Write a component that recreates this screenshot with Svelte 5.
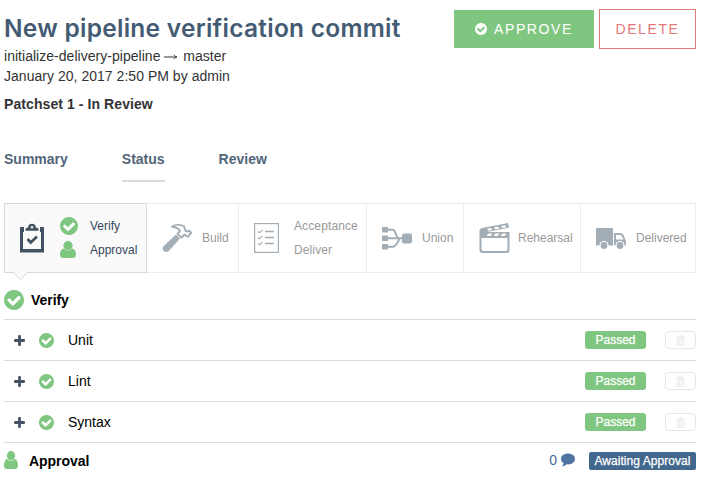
<script>
  const checks = ['Unit', 'Lint', 'Syntax'];
  const stages = [
    { icon: 'hammer', labels: ['Build'], width: 92, pad: 15, gap: 10 },
    { icon: 'list', labels: ['Acceptance', 'Deliver'], width: 128, pad: 15, gap: 15 },
    { icon: 'union', labels: ['Union'], width: 97, pad: 15, gap: 10 },
    { icon: 'clapper', labels: ['Rehearsal'], width: 117, pad: 15, gap: 8 },
    { icon: 'truck', labels: ['Delivered'], width: 115, pad: 15, gap: 10 }
  ];
</script>

{#snippet check(size)}
  <svg width={size} height={size} viewBox="128 128 1536 1536" fill="currentColor">
    <path d="M1412 734q0-28-18-46l-91-90q-19-19-45-19t-45 19l-408 407-226-226q-19-19-45-19t-45 19l-91 90q-18 18-18 46 0 27 18 45l362 362q19 19 45 19 27 0 46-19l543-543q18-18 18-45zm252 162q0 209-103 385.5t-279.5 279.5-385.5 103-385.5-103-279.5-279.5-103-385.5 103-385.5 279.5-279.5 385.5-103 385.5 103 279.5 279.5 103 385.5z" />
  </svg>
{/snippet}

{#snippet person(w, h)}
  <svg width={w} height={h} viewBox="0 0 16 18" preserveAspectRatio="none" fill="currentColor">
    <circle cx="8" cy="4.800" r="4.700" />
    <path d="M4 8C1 8.400 0 11.800 0 14.800 0 16.800 1.300 18 3 18h10c1.700 0 3-1.200 3-3.200 0-3-1-6.400-4-6.800-1 1.200-2.400 2-4 2s-3-.8-4-2z" />
  </svg>
{/snippet}

<main>
  <header>
    <div class="info">
      <h1>New pipeline verification commit</h1>
      <p>initialize-delivery-pipeline <svg class="arrow" width="14" height="8" viewBox="0 0 14 8"><path d="M0 4h12.500M10 1.800C10.800 3.200 11.800 3.700 13 4c-1.200.3-2.200.8-3 2.200" fill="none" stroke="#333" /></svg> master</p>
      <p>January 20, 2017 2:50 PM by admin</p>
      <h2>Patchset 1 - In Review</h2>
    </div>
    <div class="actions">
      <button class="approve">{@render check(12)}<span>APPROVE</span></button>
      <button class="delete">DELETE</button>
    </div>
  </header>

  <nav>
    <span>Summary</span>
    <span class="current">Status</span>
    <span>Review</span>
  </nav>

  <section class="stages">
    <div class="stage active">
      <svg width="24" height="30" viewBox="0 0 24 30">
        <path d="M0 4h4v5H3v17h18V9h-1V4h4v25.500H0z" fill="#435363" />
        <path d="M5.500 7.800V5.500l2.500-1C8.500 1.800 9.800.8 12 .8s3.500 1 4 3.700l2.500 1v2.300z" fill="#435363" />
        <circle cx="12" cy="4.300" r="1.200" fill="#fafafa" />
        <path d="M7.500 16l3.200 3.500 6.300-6" fill="none" stroke="#435363" stroke-width="2.700" />
      </svg>
      <div class="phases">
        <div><i>{@render check(18)}</i><span>Verify</span></div>
        <div><i class="up">{@render person(16, 17)}</i><span>Approval</span></div>
      </div>
      <svg class="notch" width="17" height="9" viewBox="0 0 17 9"><path d="M1 0l7.500 7.500L16 0" fill="#fafafa" stroke="#d6dadc" /></svg>
    </div>
    {#each stages as s}
      <div class="stage {s.icon}" style:width="{s.width}px" style:padding-left="{s.pad}px" style:gap="{s.gap}px">
        {#if s.icon === 'hammer'}
          <svg width="30" height="30" viewBox="0 0 30 30" fill="#a3adb5">
            <path d="M14 11.500l4 4L7 27.700c-1.700 1.700-4 1.300-5.200.2C.4 26.700.2 24.500 1.700 23z" />
            <path d="M10 3.800C13.500 1.300 18.500 1.300 22 3.300l1.500 4.500 2.300.8 1-1 2.400 2-3 4.200-2.200-1-1.500-1.300-3 3.200-4-4L18 8.200C17 5.300 14 4.300 10 3.800z" fill="#fff" stroke="#a3adb5" stroke-width="1.900" stroke-linejoin="round" />
          </svg>
        {:else if s.icon === 'list'}
          <svg width="25" height="30" viewBox="0 0 25 30" fill="none" stroke="#a3adb5">
            <rect x=".6" y=".6" width="23.800" height="28.800" stroke-width="1.200" />
            <path d="M11 8.500h9M11 14.500h9M11 20.500h9" stroke-width="1.300" />
            <path d="M4 8.500l1.500 1.300 3-3M4 14.500l1.500 1.300 3-3M4 20.500l1.500 1.300 3-3" stroke-width="1.200" />
          </svg>
        {:else if s.icon === 'union'}
          <svg width="30" height="24" viewBox="0 0 30 24" fill="#a3adb5">
            <path d="M0 1h6v5.500H0zM0 9.500h6V15H0zM0 18h6v5.500H0z" />
            <rect x="20" y="7.500" width="10" height="10" rx="2" />
            <path d="M5 3.800h6c2.500 0 3.200 8.500 5.500 8.500S13.500 20.800 11 20.800H5M5 12.300h16" fill="none" stroke="#a3adb5" stroke-width="2" />
          </svg>
        {:else if s.icon === 'clapper'}
          <svg width="31" height="30" viewBox="0 0 31 30" fill="#a3adb5">
            <path fill-rule="evenodd" d="M.5 9H30.500v18q0 3-3 3H3.500q-3 0-3-3zM2.500 15v11Q2.500 28 4.500 28h22q2 0 2-2V15z" />
            <path d="M.5 9.800V7.500Q.6 5.500 3 5L29 0l1 4.800L4 9.800z" />
            <path d="M8 5.800l3.500-.8 2 2-4 .8zM15 4.300l3.500-.7 2 2-4 .8zM22 3l3.500-.7 2 2-4 .8zM9.500 10.600h4l-2 2.500h-4zM16.500 10.600h4l-2 2.500h-4zM23.500 10.600h4l-2 2.500h-4z" fill="#fff" />
          </svg>
        {:else}
          <svg width="30" height="23" viewBox="0 0 30 23" fill="#a3adb5">
            <path d="M1 1h15q1 0 1 1v16.500H0V2q0-1 1-1z" />
            <path fill-rule="evenodd" d="M18 18.500V6h6.500q2 0 3 2l2.500 6.500v4zM20 8v4.500h7.500L25.500 8.800q-.4-.8-1.200-.8z" />
            <circle cx="8" cy="18.500" r="4" stroke="#fff" stroke-width="1.200" /><circle cx="24" cy="18.500" r="4" stroke="#fff" stroke-width="1.200" />
          </svg>
        {/if}
        <div class="labels">{#each s.labels as l}<span>{l}</span>{/each}</div>
      </div>
    {/each}
  </section>

  <section>
    <div class="heading"><i>{@render check(20)}</i><h3>Verify</h3></div>
    {#each checks as name}
      <div class="row">
        <svg width="11" height="11" viewBox="0 0 11 11"><path d="M5.500 1.300v8.400M1.300 5.500h8.400" stroke="#435363" stroke-width="2.800" stroke-linecap="round" /></svg>
        <i>{@render check(15)}</i>
        <span class="name">{name}</span>
        <span class="badge">Passed</span>
        <span class="trash">
          <svg width="9" height="11" viewBox="0 0 9 11" fill="#efefef"><path fill-rule="evenodd" d="M0 1.500h2.500L3 0h3l.5 1.500H9v1.500H8.300V11H.8V3H0zM2.500 4.200v5h.7v-5zm1.700 0v5h.7v-5zm1.700 0v5h.7v-5z" /></svg>
        </span>
      </div>
    {/each}
    <div class="approval">
      <i>{@render person(14, 18)}</i>
      <h3>Approval</h3>
      <span class="count">0</span>
      <svg class="bubble" width="14" height="14" viewBox="0 0 14 14" fill="#4f74a3"><path d="M7 .5C3 .5 0 2.800 0 6c0 1.800 1 3.200 2.600 4.100-.2 1.200-.8 2.200-1.700 3.200C3 13.300 4.600 12.500 5.700 11.300c4.600.6 8.300-1.900 8.300-5.300C14 2.800 11 .5 7 .5z" /></svg>
      <span class="waiting">Awaiting Approval</span>
    </div>
  </section>
</main>

<style>
  :global(body) { background: #fff; }
  main { box-sizing: border-box; width: 703px; height: 482px; overflow: hidden; padding: 9px 7px 0 4px; font: 14px/20px "Liberation Sans", Arial, sans-serif; color: #333; }
  h1, h2, h3, p { margin: 0; white-space: nowrap; }
  svg { display: block; flex: none; }
  i { display: block; color: #7fc780; flex: none; }
  header { display: flex; justify-content: space-between; height: 132px; }
  .info { width: 410px; }
  .info p { letter-spacing: .03px; }
  h1 { box-sizing: border-box; height: 37px; padding-top: 2px; font: 600 24.500px/35px Inter, "Open Sans", sans-serif; color: #435b73; letter-spacing: .26px; }
  .arrow { display: inline-block; vertical-align: 0; margin-right: 1px; }
  h2 { font-size: 14px; margin-top: 8px; letter-spacing: .08px; }
  .actions { display: flex; gap: 5px; align-items: center; height: 40px; }
  button { box-sizing: border-box; display: flex; align-items: center; justify-content: center; border: 0; padding: 0; font: 14px/20px "Liberation Sans", Arial, sans-serif; letter-spacing: 1.6px; }
  .approve { width: 140px; height: 38px; gap: 7px; background: #7fc780; color: #fff; }
  .delete { width: 97px; height: 40px; border: 1px solid #e57878; background: #fff; color: #e57878; }
  nav { display: flex; height: 62px; font-weight: bold; color: #52657a; }
  nav span { padding-top: 8px; height: 31px; margin-right: 54px; }
  .current { border-bottom: 2px solid #d6dbdf; }
  .stages { display: flex; height: 70px; }
  .stage { box-sizing: border-box; display: flex; flex: none; align-items: center; height: 70px; border: solid #ececec; border-width: 1px 1px 1px 0; color: #999; font-size: 12px; }
  .list { letter-spacing: .12px; }
  .labels { display: flex; flex-direction: column; gap: 4px; }
  .stage.active { position: relative; width: 143px; border: 1px solid #d6dadc; background: #fafafa; padding-left: 15px; color: #35485c; gap: 16px; }
  .phases { display: flex; flex-direction: column; gap: 4px; }
  .phases div { display: flex; align-items: center; height: 20px; }
  .phases i { width: 30px; }
  .phases .up { margin-bottom: 1px; }
  .notch { position: absolute; left: 7px; top: 68px; }
  .heading { display: flex; align-items: center; height: 46px; box-sizing: border-box; padding-top: 8px; }
  .heading i { width: 27px; }
  h3 { font-size: 14px; color: #000; letter-spacing: -.05px; }
  .row { box-sizing: border-box; height: 41px; display: flex; align-items: center; border-top: 1px solid #d9dcdf; padding-left: 10px; color: #000; }
  .row i { margin-left: 14px; width: 29px; }
  .name { flex: 1; }
  .badge { width: 61px; height: 18px; line-height: 18px; text-align: center; border-radius: 3px; background: #7fc780; color: #fff; font-size: 12px; -webkit-text-stroke: .25px #fff; margin-right: 19px; }
  .trash { box-sizing: border-box; width: 31px; height: 18px; border: 1px solid #e7e7e7; border-radius: 4px; display: flex; align-items: center; justify-content: center; }
  .approval { box-sizing: border-box; height: 37px; border-top: 1px solid #d9dcdf; display: flex; align-items: center; }
  .approval i { width: 25px; margin-bottom: 3px; }
  .approval h3 { flex: 1; }
  .count { color: #4a6b96; margin: 0 4px 2px 0; }
  .bubble { margin: 0 14px 3px 0; }
  .waiting { width: 107px; height: 18px; line-height: 18px; text-align: center; border-radius: 2px; background: #43688d; color: #fff; font-size: 12px; letter-spacing: .05px; -webkit-text-stroke: .25px #fff; }
</style>
